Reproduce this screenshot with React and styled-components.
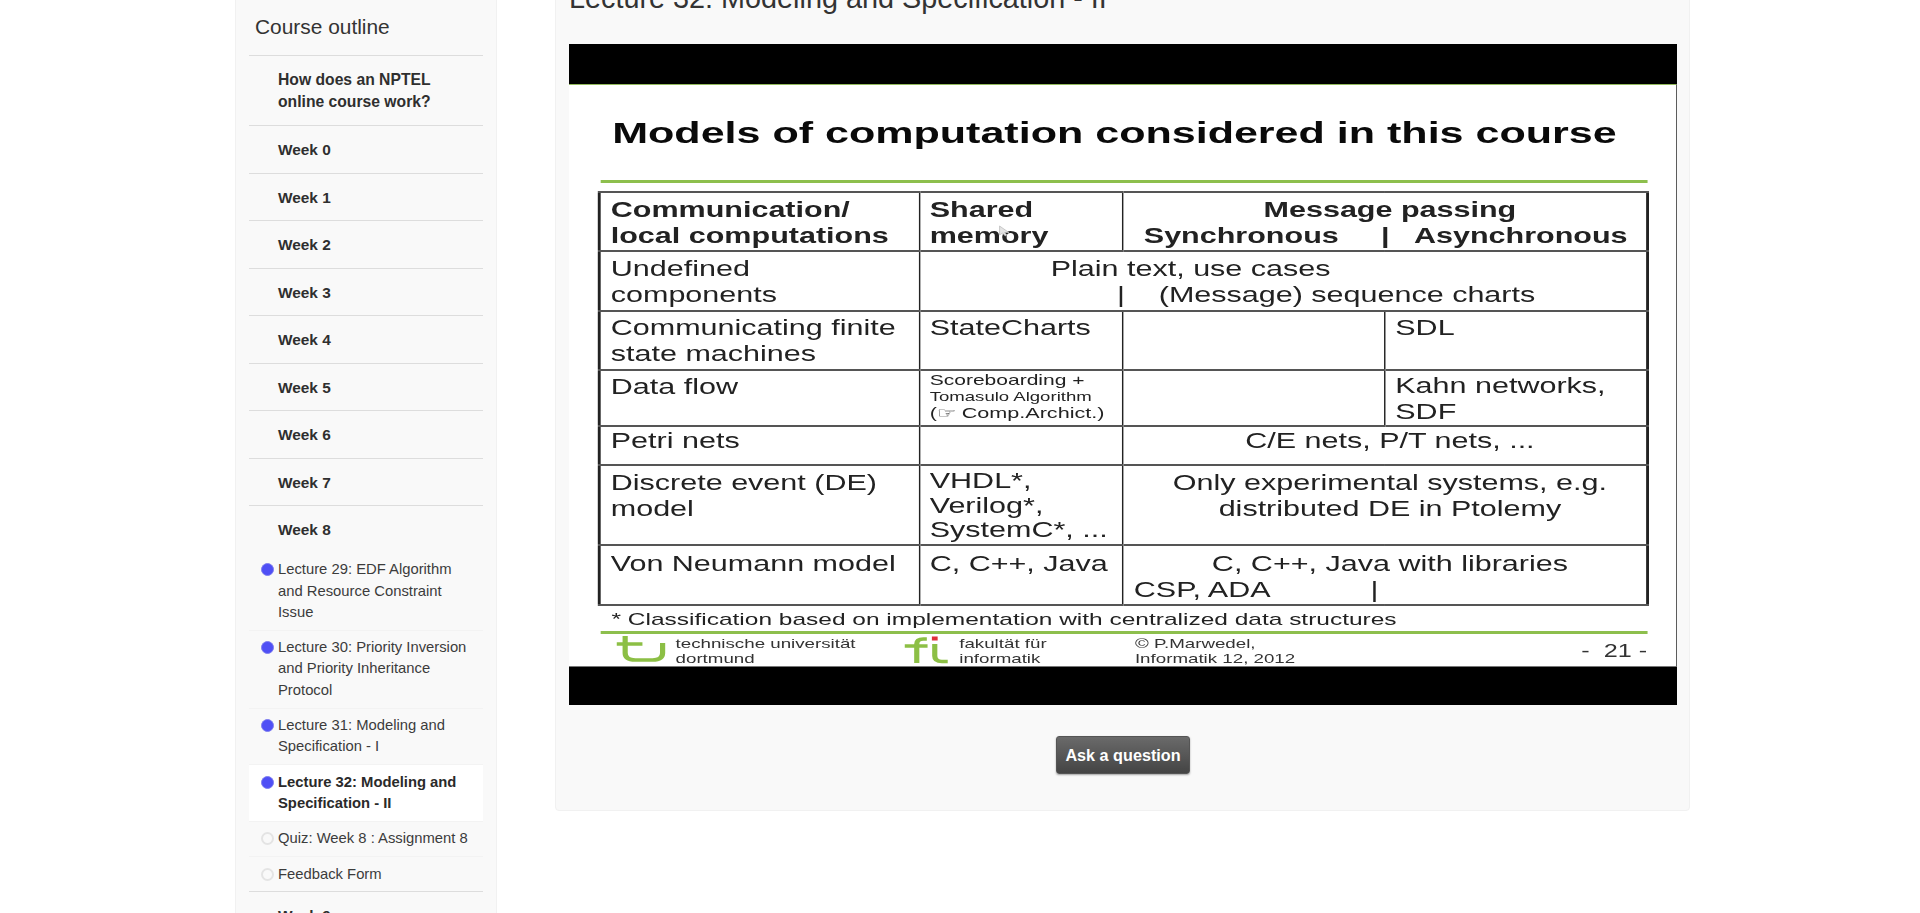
import React from "react";
import styled, { createGlobalStyle } from "styled-components";

const GlobalStyle = createGlobalStyle`
  html, body {
    margin: 0;
    height: 913px;
    overflow: hidden;
    background: #fff;
    font-family: "Liberation Sans", Arial, sans-serif;
    color: #333;
  }
`;

const Page = styled.div`
  display: flex;
  align-items: flex-start;
  gap: 58px;
  margin-top: -40px;
  padding-left: 235px;
`;

const Sidebar = styled.aside`
  box-sizing: border-box;
  width: 262px;
  height: 1000px;
  padding: 0 13px;
  background: #f9f9f9;
  border: 1px solid #f1f1f1;
  flex: none;
`;

const SideTitle = styled.h3`
  margin: 0;
  box-sizing: border-box;
  height: 95px;
  padding: 54px 6px 0;
  font-size: 20.9px;
  line-height: 24px;
  font-weight: 400;
  color: #333;
  border-bottom: 1px solid #ddd;
`;

const WeekRow = styled.div`
  box-sizing: border-box;
  padding: ${(p) => (p.$tall ? "12.5px" : "12.75px")} 40px 12.75px 29px;
  font-size: ${(p) => (p.$tall ? "15.7px" : "15.4px")};
  font-weight: 700;
  line-height: ${(p) => (p.$tall ? "22px" : "21px")};
  color: #2f2f2f;
  border-bottom: ${(p) => (p.$open ? "none" : "1px solid #ddd")};
`;

const LessonList = styled.div`
  border-bottom: 1px solid #ddd;
`;

const Lesson = styled.div`
  box-sizing: border-box;
  display: flex;
  align-items: flex-start;
  gap: 4px;
  padding: 6.5px 10px 6.5px 12px;
  font-size: 14.8px;
  font-weight: ${(p) => (p.$active ? 700 : 400)};
  line-height: 21.3px;
  color: ${(p) => (p.$active ? "#2a2a2a" : "#3c3c3c")};
  background: ${(p) => (p.$active ? "#fff" : "transparent")};
  border-bottom: ${(p) => (p.$last ? "none" : "1px solid #f3f3f3")};
`;

const Bullet = styled.span`
  box-sizing: border-box;
  flex: none;
  width: 13px;
  height: 13px;
  margin-top: 4px;
  border-radius: 50%;
  background: ${(p) => (p.$done ? "#4f4ff5" : "#f9f9f9")};
  border: ${(p) => (p.$done ? "1px solid #7d7df0" : "2px solid #e4e4e4")};
`;

const MainPanel = styled.main`
  box-sizing: border-box;
  width: 1135px;
  flex: none;
  padding: 0 12px 36px 13px;
  background: #f9f9f9;
  border: 1px solid #f1f1f1;
  border-radius: 4px;
`;

const LessonTitle = styled.h2`
  margin: 0;
  height: 83px;
  padding-top: 20px;
  box-sizing: border-box;
  font-size: 28.8px;
  line-height: 34px;
  font-weight: 400;
  color: #333;
`;

const Video = styled.div`
  box-sizing: border-box;
  width: 1108px;
  height: 661px;
  padding: 40px 0 38px;
  background: #000;
  overflow: hidden;
`;

// the frame is stretched sideways in the video, hence the scaleX
const Slide = styled.div`
  position: relative;
  box-sizing: border-box;
  width: 769.45px;
  height: 583px;
  padding-left: 21.5px;
  background: #fff;
  color: #222;
  border-top: 1px solid #93b95c;
  border-bottom: 1px solid #777;
  transform: scaleX(1.44);
  transform-origin: left top;
  filter: blur(0.35px);
  overflow: hidden;
`;

const SlideTitle = styled.div`
  margin-left: 8.5px;
  padding-top: 30px;
  font-size: 29.9px;
  line-height: 35px;
  font-weight: 700;
  color: #0a0a0a;
  white-space: nowrap;
`;

const GreenRule = styled.div`
  width: 727px;
  height: 3px;
  margin-top: ${(p) => p.$top}px;
  background: #8dbf4d;
`;

const Table = styled.table`
  width: 728px;
  margin: 8px 0 0 -1.5px;
  table-layout: fixed;
  border-collapse: collapse;
  border: 2.5px solid #222;
`;

const Row = styled.tr`
  height: ${(p) => p.$h}px;
`;

const Cell = styled.td`
  box-sizing: border-box;
  padding: ${(p) => p.$top ?? 3}px 0 0 7px;
  vertical-align: top;
  font-size: 21.2px;
  line-height: ${(p) => (p.$tight ? "24.5px" : "25.6px")};
  font-weight: ${(p) => (p.$bold ? 700 : 400)};
  text-align: ${(p) => (p.$center ? "center" : "left")};
  white-space: pre;
  border-top: 2px solid #555;
  border-bottom: 2px solid #555;
  border-left: 1px solid #222;
  border-right: 1px solid #222;
`;

const Line = styled.div`
  padding-left: ${(p) => p.$indent ?? 0}px;
  text-align: ${(p) => (p.$center ? "center" : "left")};
`;

const TinyCell = styled(Cell)`
  padding-top: 1px;
`;

const TinyLine = styled.div`
  font-size: ${(p) => p.$size}px;
  line-height: 16.5px;
`;

const Footnote = styled.div`
  margin: 4px 0 0 8px;
  font-size: 17px;
  line-height: 20px;
  white-space: nowrap;
`;

const SlideFooter = styled.div`
  display: grid;
  grid-template-columns: 41px 159px 38px 122px 310px auto;
  align-items: start;
  width: 728px;
  padding-left: 11.5px;
  box-sizing: border-box;
  margin-top: 2px;
  font-size: 13px;
  line-height: 15px;
  color: #333;
`;

const LogoBox = styled.svg`
  margin-top: -1px;
`;

const PageNo = styled.div`
  padding-top: 5px;
  font-size: 17.5px;
  line-height: 20px;
  white-space: pre;
`;

const Cursor = styled.svg`
  position: absolute;
  left: 298px;
  top: 140px;
`;

const AskRow = styled.div`
  display: flex;
  justify-content: center;
  margin-top: 31px;
`;

const AskButton = styled.button`
  box-sizing: border-box;
  width: 134px;
  height: 38px;
  padding: 0;
  font-family: inherit;
  font-size: 16.2px;
  font-weight: 700;
  color: #fff;
  background: linear-gradient(#6a6a6a, #444);
  border: 1px solid #555;
  border-radius: 3px;
  box-shadow: 0 1px 2px rgba(0, 0, 0, 0.35);
`;

const weeksBefore = ["Week 0", "Week 1", "Week 2", "Week 3", "Week 4", "Week 5", "Week 6", "Week 7"];

const lessons = [
  { title: "Lecture 29: EDF Algorithm and Resource Constraint Issue", done: true },
  { title: "Lecture 30: Priority Inversion and Priority Inheritance Protocol", done: true },
  { title: "Lecture 31: Modeling and Specification - I", done: true },
  { title: "Lecture 32: Modeling and Specification - II", done: true, active: true },
  { title: "Quiz: Week 8 : Assignment 8" },
  { title: "Feedback Form", last: true },
];

const TuLogo = () => (
  <LogoBox width="36" height="28" viewBox="0 0 36 28" fill="none" stroke="#8cbf45" strokeWidth="3.6">
    <path d="M0 9H18" />
    <path d="M6 1V18Q6 25 13 25H25Q32 25 32 18V8" />
  </LogoBox>
);

const FiLogo = () => (
  <LogoBox width="32" height="29" viewBox="0 0 32 29" fill="none" stroke="#8cbf45" strokeWidth="3.6">
    <path d="M0 11H16" />
    <path d="M8.5 28V9Q8.5 4 13 4H15.5" />
    <path d="M21 9V21Q21 26.5 26 26.5H30" />
    <rect x="19" y="1.5" width="4" height="4" fill="#e0303a" stroke="none" />
  </LogoBox>
);

const SlideFrame = () => (
  <Slide>
    <SlideTitle>Models of computation considered in this course</SlideTitle>
    <GreenRule $top={30} />
    <Table>
      <colgroup>
        <col style={{ width: 222 }} />
        <col style={{ width: 141.7 }} />
        <col style={{ width: 181.6 }} />
        <col style={{ width: 182.7 }} />
      </colgroup>
      <tbody>
        <Row $h={59}>
          <Cell $bold $top={4}>
            Communication/{"\n"}local computations
          </Cell>
          <Cell $bold $top={4}>
            Shared{"\n"}memory
          </Cell>
          <Cell $bold $center $top={4} colSpan={2}>
            Message passing{"\n"}Synchronous     |   Asynchronous{" "}
          </Cell>
        </Row>
        <Row $h={60}>
          <Cell $top={4}>Undefined{"\n"}components</Cell>
          <Cell $top={4} colSpan={3}>
            <Line $indent={84}>Plain text, use cases</Line>
            <Line $indent={130}>|    (Message) sequence charts</Line>
          </Cell>
        </Row>
        <Row $h={59}>
          <Cell>Communicating finite{"\n"}state machines</Cell>
          <Cell>StateCharts</Cell>
          <Cell />
          <Cell>SDL</Cell>
        </Row>
        <Row $h={56}>
          <Cell $top={3}>Data flow</Cell>
          <TinyCell>
            <TinyLine $size={14.6}>Scoreboarding +</TinyLine>
            <TinyLine $size={12.9}>Tomasulo Algorithm</TinyLine>
            <TinyLine $size={15}>(☞ Comp.Archict.)</TinyLine>
          </TinyCell>
          <Cell />
          <Cell $top={2}>Kahn networks,{"\n"}SDF</Cell>
        </Row>
        <Row $h={39}>
          <Cell $top={1}>Petri nets</Cell>
          <Cell />
          <Cell $center $top={1} colSpan={2}>
            C/E nets, P/T nets, ...
          </Cell>
        </Row>
        <Row $h={80}>
          <Cell $top={4}>Discrete event (DE){"\n"}model</Cell>
          <Cell $top={3} $tight>VHDL*,{"\n"}Verilog*,{"\n"}SystemC*, ...</Cell>
          <Cell $center $top={4} colSpan={2}>
            Only experimental systems, e.g.{"\n"}distributed DE in Ptolemy
          </Cell>
        </Row>
        <Row $h={60}>
          <Cell $top={5}>Von Neumann model</Cell>
          <Cell $top={5}>C, C++, Java</Cell>
          <Cell $top={5} colSpan={2}>
            <Line $center>C, C++, Java with libraries</Line>
            <Line>CSP, ADA            |</Line>
          </Cell>
        </Row>
      </tbody>
    </Table>
    <Footnote>* Classification based on implementation with centralized data structures</Footnote>
    <GreenRule $top={1} />
    <SlideFooter>
      <TuLogo />
      <div>
        technische universität
        <br />
        dortmund
      </div>
      <FiLogo />
      <div>
        fakultät für
        <br />
        informatik
      </div>
      <div>
        © P.Marwedel,
        <br />
        Informatik 12, 2012
      </div>
      <PageNo>-  21 -</PageNo>
    </SlideFooter>
    <Cursor width="8" height="12" viewBox="0 0 8 12">
      <path d="M1 1V10L3 8L5 11L6 10L4.5 7.5H7.5Z" fill="#e4e4e4" stroke="#bbb" strokeWidth="0.6" />
    </Cursor>
  </Slide>
);

const App = () => {
  return (
    <>
      <GlobalStyle />
      <Page>
        <Sidebar>
          <SideTitle>Course outline</SideTitle>
          <WeekRow $tall>How does an NPTEL online course work?</WeekRow>
          {weeksBefore.map((w) => (
            <WeekRow key={w}>{w}</WeekRow>
          ))}
          <WeekRow $open>Week 8</WeekRow>
          <LessonList>
            {lessons.map((l) => (
              <Lesson key={l.title} $active={l.active} $last={l.last}>
                <Bullet $done={l.done} />
                <span>{l.title}</span>
              </Lesson>
            ))}
          </LessonList>
          <WeekRow>Week 9</WeekRow>
        </Sidebar>
        <MainPanel>
          <LessonTitle>Lecture 32: Modeling and Specification - II</LessonTitle>
          <Video>
            <SlideFrame />
          </Video>
          <AskRow>
            <AskButton>Ask a question</AskButton>
          </AskRow>
        </MainPanel>
      </Page>
    </>
  );
};

export default App;
